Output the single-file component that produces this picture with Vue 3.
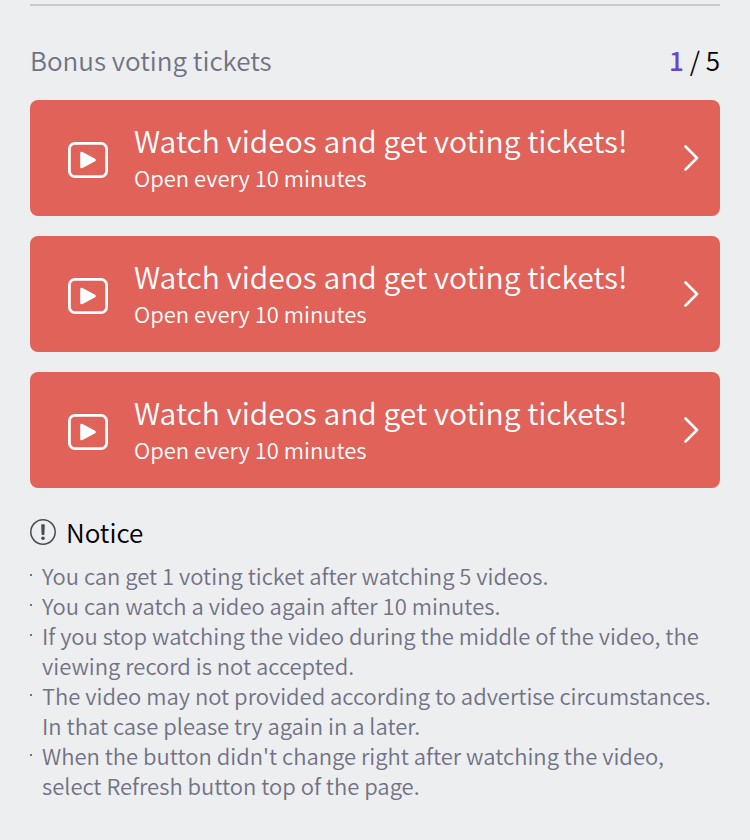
<template>
  <main class="page">
    <section class="bonus">
      <div class="bonus-header">
        <h2 class="bonus-title">Bonus voting tickets</h2>
        <div class="bonus-count"><span class="current">{{ watched }}</span> / {{ total }}</div>
      </div>

      <div class="ticket-list">
        <button v-for="item in tickets" :key="item.id" type="button" class="ticket">
          <svg class="icon-play" viewBox="0 0 40 36" aria-hidden="true">
            <rect x="1.4" y="1.4" width="37.2" height="33.2" rx="5.6" fill="none" stroke="#fff" stroke-width="2.8" />
            <path d="M13.5 11v14l13-7z" fill="#fff" stroke="#fff" stroke-width="2.6" stroke-linejoin="round" />
          </svg>
          <span class="ticket-text">
            <span class="ticket-title">{{ item.title }}</span>
            <span class="ticket-desc">{{ item.desc }}</span>
          </span>
          <svg class="icon-arrow" viewBox="0 0 16 28" aria-hidden="true">
            <path d="M1.5 2.5L13 14 1.5 25.5" fill="none" stroke="#fff" stroke-width="2.6" stroke-linecap="round" stroke-linejoin="round" />
          </svg>
        </button>
      </div>
    </section>

    <section class="notice">
      <h3 class="notice-title">
        <svg class="icon-notice" viewBox="0 0 26 26" aria-hidden="true">
          <circle cx="13" cy="13" r="12.2" fill="none" stroke="#4a4a52" stroke-width="1.5" />
          <path d="M11.2 6.2q0-1 1-1h1.6q1 0 1 1l-.4 9q0 .8-.8.8h-1.2q-.8 0-.8-.8z" fill="#4a4a52" />
          <circle cx="13" cy="19.3" r="1.8" fill="#4a4a52" />
        </svg>
        <span>Notice</span>
      </h3>
      <ul class="notice-list">
        <li v-for="(text, index) in notices" :key="index">{{ text }}</li>
      </ul>
    </section>
  </main>
</template>

<script setup>
import { ref } from 'vue'

const watched = ref(1)
const total = ref(5)

const tickets = ref([
  { id: 1, title: 'Watch videos and get voting tickets!', desc: 'Open every 10 minutes' },
  { id: 2, title: 'Watch videos and get voting tickets!', desc: 'Open every 10 minutes' },
  { id: 3, title: 'Watch videos and get voting tickets!', desc: 'Open every 10 minutes' },
])

const notices = [
  'You can get 1 voting ticket after watching 5 videos.',
  'You can watch a video again after 10 minutes.',
  'If you stop watching the video during the middle of the video, the\nviewing record is not accepted.',
  'The video may not provided according to advertise circumstances.\nIn that case please try again in a later.',
  "When the button didn't change right after watching the video,\nselect Refresh button top of the page.",
]
</script>

<style>
body {
  background: #edeef0;
}
</style>

<style scoped>
.page {
  padding: 4px 30px 36px;
  font-family: 'Noto Sans CJK KR', 'Noto Sans', sans-serif;
  font-weight: 350;
  color: #000;
}

/* --- Bonus --- */
.bonus {
  border-top: 2px solid #c8c9cd;
  padding-top: 34px;
}

.bonus-header {
  display: flex;
  justify-content: space-between;
  align-items: center;
  margin-bottom: 20px;
  font-size: 26px;
  line-height: 40px;
}

.bonus-title {
  margin: 0;
  font-size: 26px;
  font-weight: 350;
  color: #717284;
}

.current {
  font-weight: 500;
  color: #6644cc;
}

/* --- Tickets --- */
.ticket-list {
  display: flex;
  flex-direction: column;
  gap: 20px;
}

.ticket {
  display: flex;
  align-items: center;
  width: 100%;
  padding: 18px 20px 24px 38px;
  border: 0;
  border-radius: 8px;
  background: #e16259;
  color: #fff;
  font-family: inherit;
  font-weight: 350;
  text-align: left;
  cursor: pointer;
}

.icon-play {
  flex: none;
  width: 40px;
  height: 36px;
  margin-top: 10px;
}

.ticket-text {
  flex: 1;
  display: flex;
  flex-direction: column;
  margin-left: 26px;
}

.ticket-title {
  font-size: 30px;
  line-height: 44px;
}

.ticket-desc {
  font-size: 22px;
  line-height: 30px;
}

.icon-arrow {
  flex: none;
  width: 16px;
  height: 28px;
  margin-top: 6px;
}

/* --- Notice --- */
.notice {
  margin-top: 24px;
}

.notice-title {
  display: flex;
  align-items: center;
  gap: 10px;
  margin: 0 0 8px;
  font-size: 26px;
  font-weight: 350;
  line-height: 40px;
}

.icon-notice {
  width: 26px;
  height: 26px;
}

.notice-list {
  margin: 0;
  padding: 0;
  list-style: none;
  font-size: 22px;
  line-height: 30px;
  color: #717284;
}

.notice-list li {
  position: relative;
  padding-left: 12px;
  white-space: pre-line;
}

.notice-list li::before {
  content: '';
  position: absolute;
  top: 14px;
  left: 0;
  width: 2px;
  height: 2px;
  background: #717284;
}
</style>
